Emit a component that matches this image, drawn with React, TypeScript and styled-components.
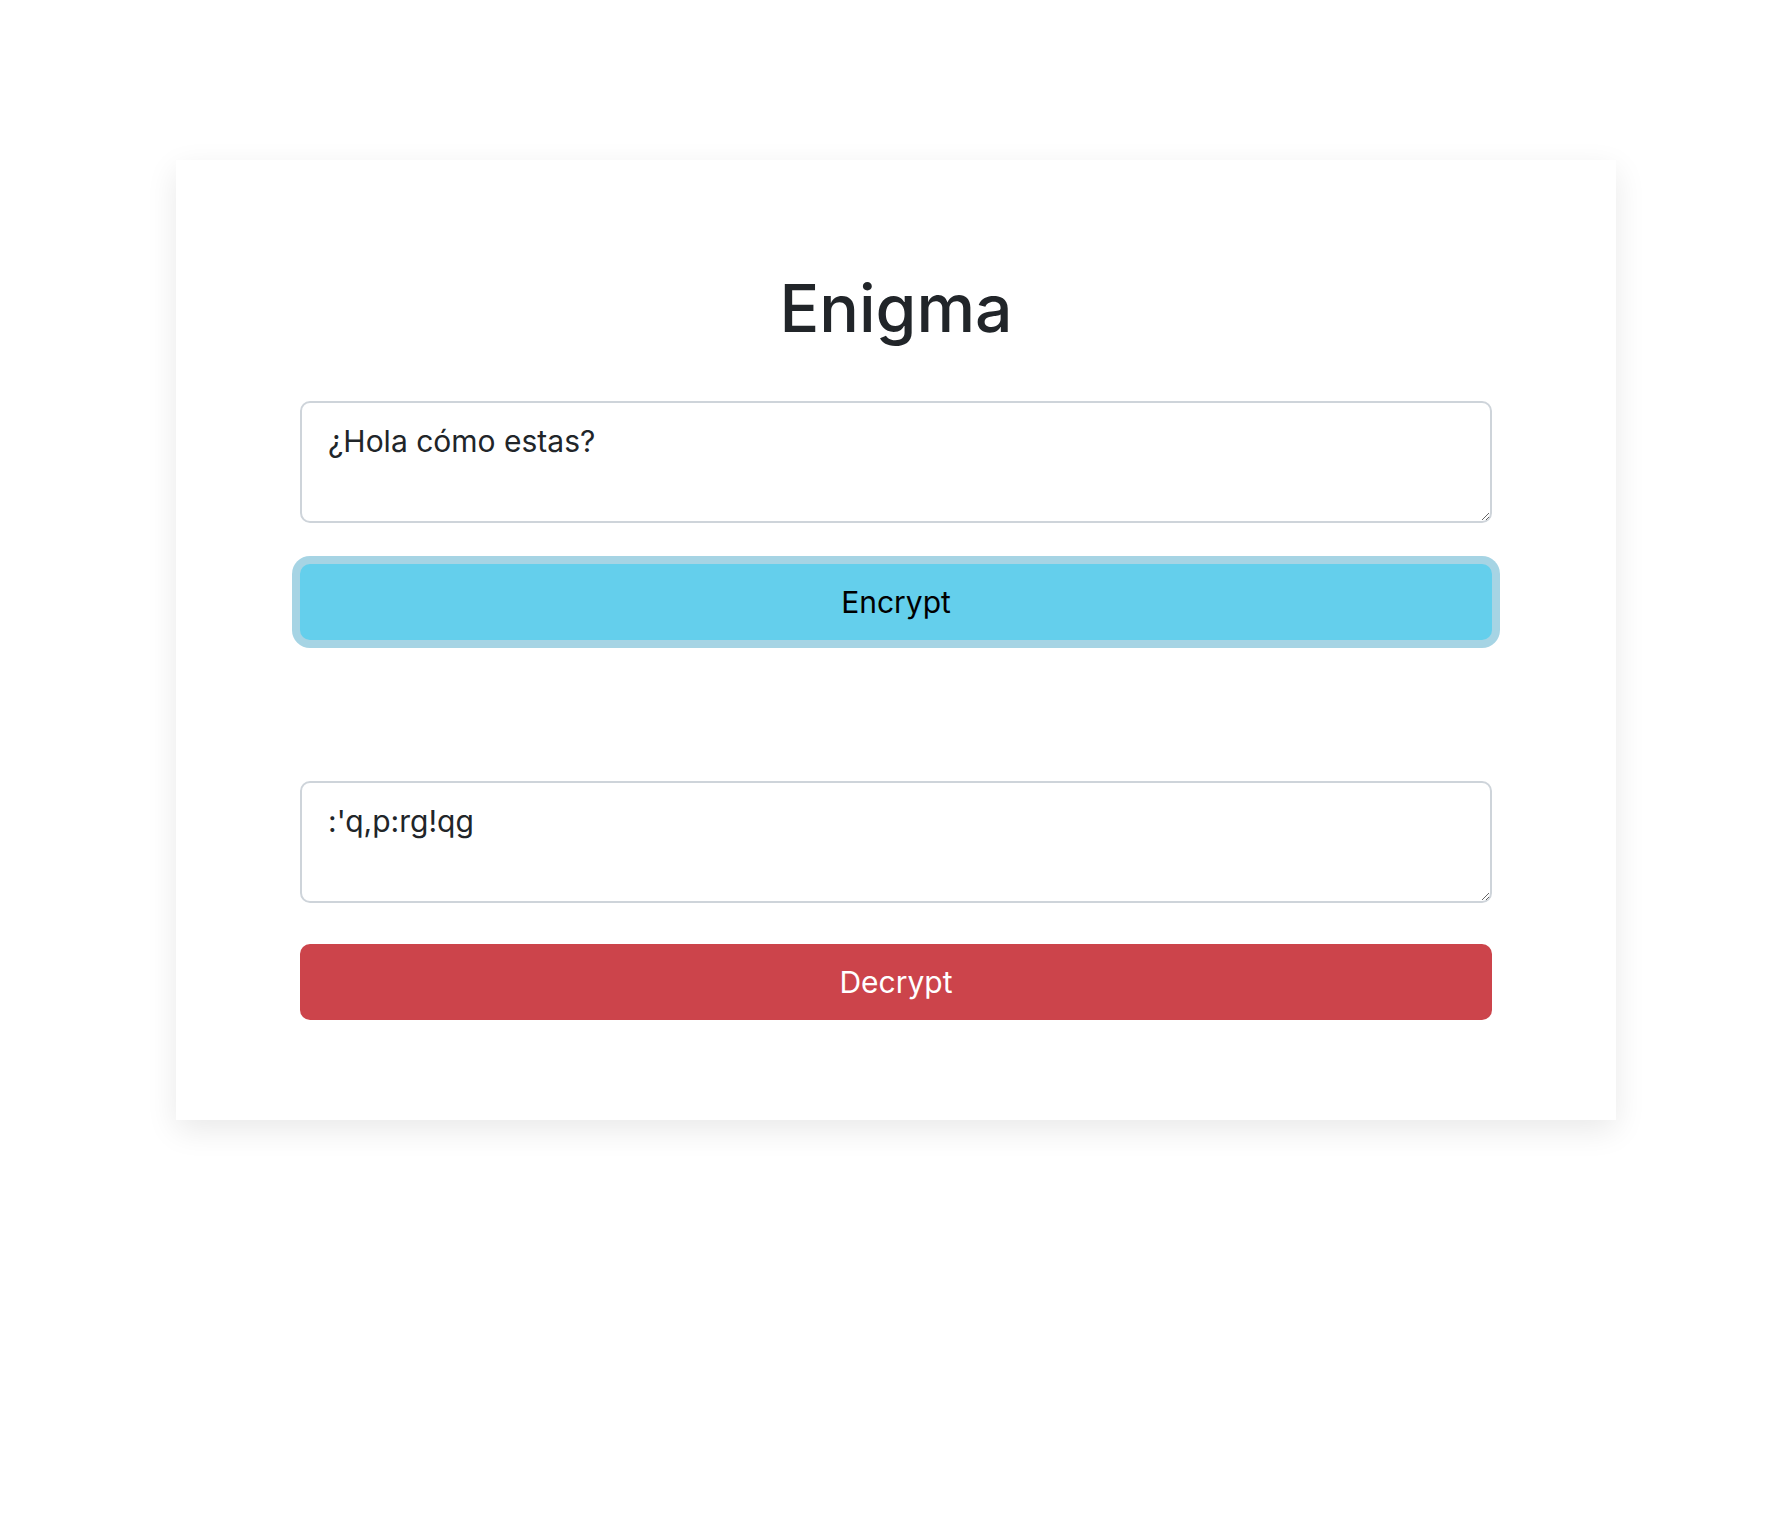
import styled, { createGlobalStyle } from 'styled-components'

const GlobalStyle = createGlobalStyle`
  body {
    margin: 0;
    background: #ffffff;
    font-family: Inter, "Noto Sans", sans-serif;
    color: #212529;
  }
`

export default function App() {
  return (
    <>
      <GlobalStyle />
      <Page>
        <Card>
          <Title>Enigma</Title>
          <Section>
            <TextBox defaultValue="¿Hola cómo estas?" />
            <Button $variant="info" $focused>Encrypt</Button>
          </Section>
          <Section>
            <TextBox defaultValue=":'q,p:rg!qg" />
            <Button $variant="danger">Decrypt</Button>
          </Section>
        </Card>
      </Page>
    </>
  )
}

const Page = styled.main`
  display: flex;
  justify-content: center;
  align-items: flex-start;
  padding-top: 160px;
  min-height: 1528px;
  box-sizing: border-box;
`

const Card = styled.div`
  width: 1440px;
  box-sizing: border-box;
  padding: 108px 124px 100px;
  background: #ffffff;
  box-shadow: 0 10px 30px rgba(0, 0, 0, 0.09);
  display: flex;
  flex-direction: column;
  gap: 141px;
`

const Title = styled.h1`
  margin: 0 0 -88px;
  font-size: 66px;
  font-weight: 500;
  line-height: 80px;
  text-align: center;
  color: #212529;
`

const Section = styled.div`
  display: flex;
  flex-direction: column;
  gap: 41px;
`

const TextBox = styled.textarea`
  box-sizing: border-box;
  width: 100%;
  height: 122px;
  padding: 16px 26px 8px;
  font-family: Inter, "Noto Sans", sans-serif;
  font-size: 30px;
  line-height: 45px;
  color: #212529;
  border: 2px solid #ced4da;
  border-radius: 10px;
  outline: none;
  resize: vertical;
`

const Button = styled.button<{ $variant: 'info' | 'danger'; $focused?: boolean }>`
  height: 76px;
  width: 100%;
  border: none;
  border-radius: 10px;
  font-family: Inter, "Noto Sans", sans-serif;
  font-size: 30px;
  cursor: pointer;
  background: ${p => (p.$variant === 'info' ? '#64cfec' : '#cc444b')};
  color: ${p => (p.$variant === 'info' ? '#000000' : '#ffffff')};
  box-shadow: ${p => (p.$focused ? '0 0 0 8px #a6d4e4' : 'none')};
`
